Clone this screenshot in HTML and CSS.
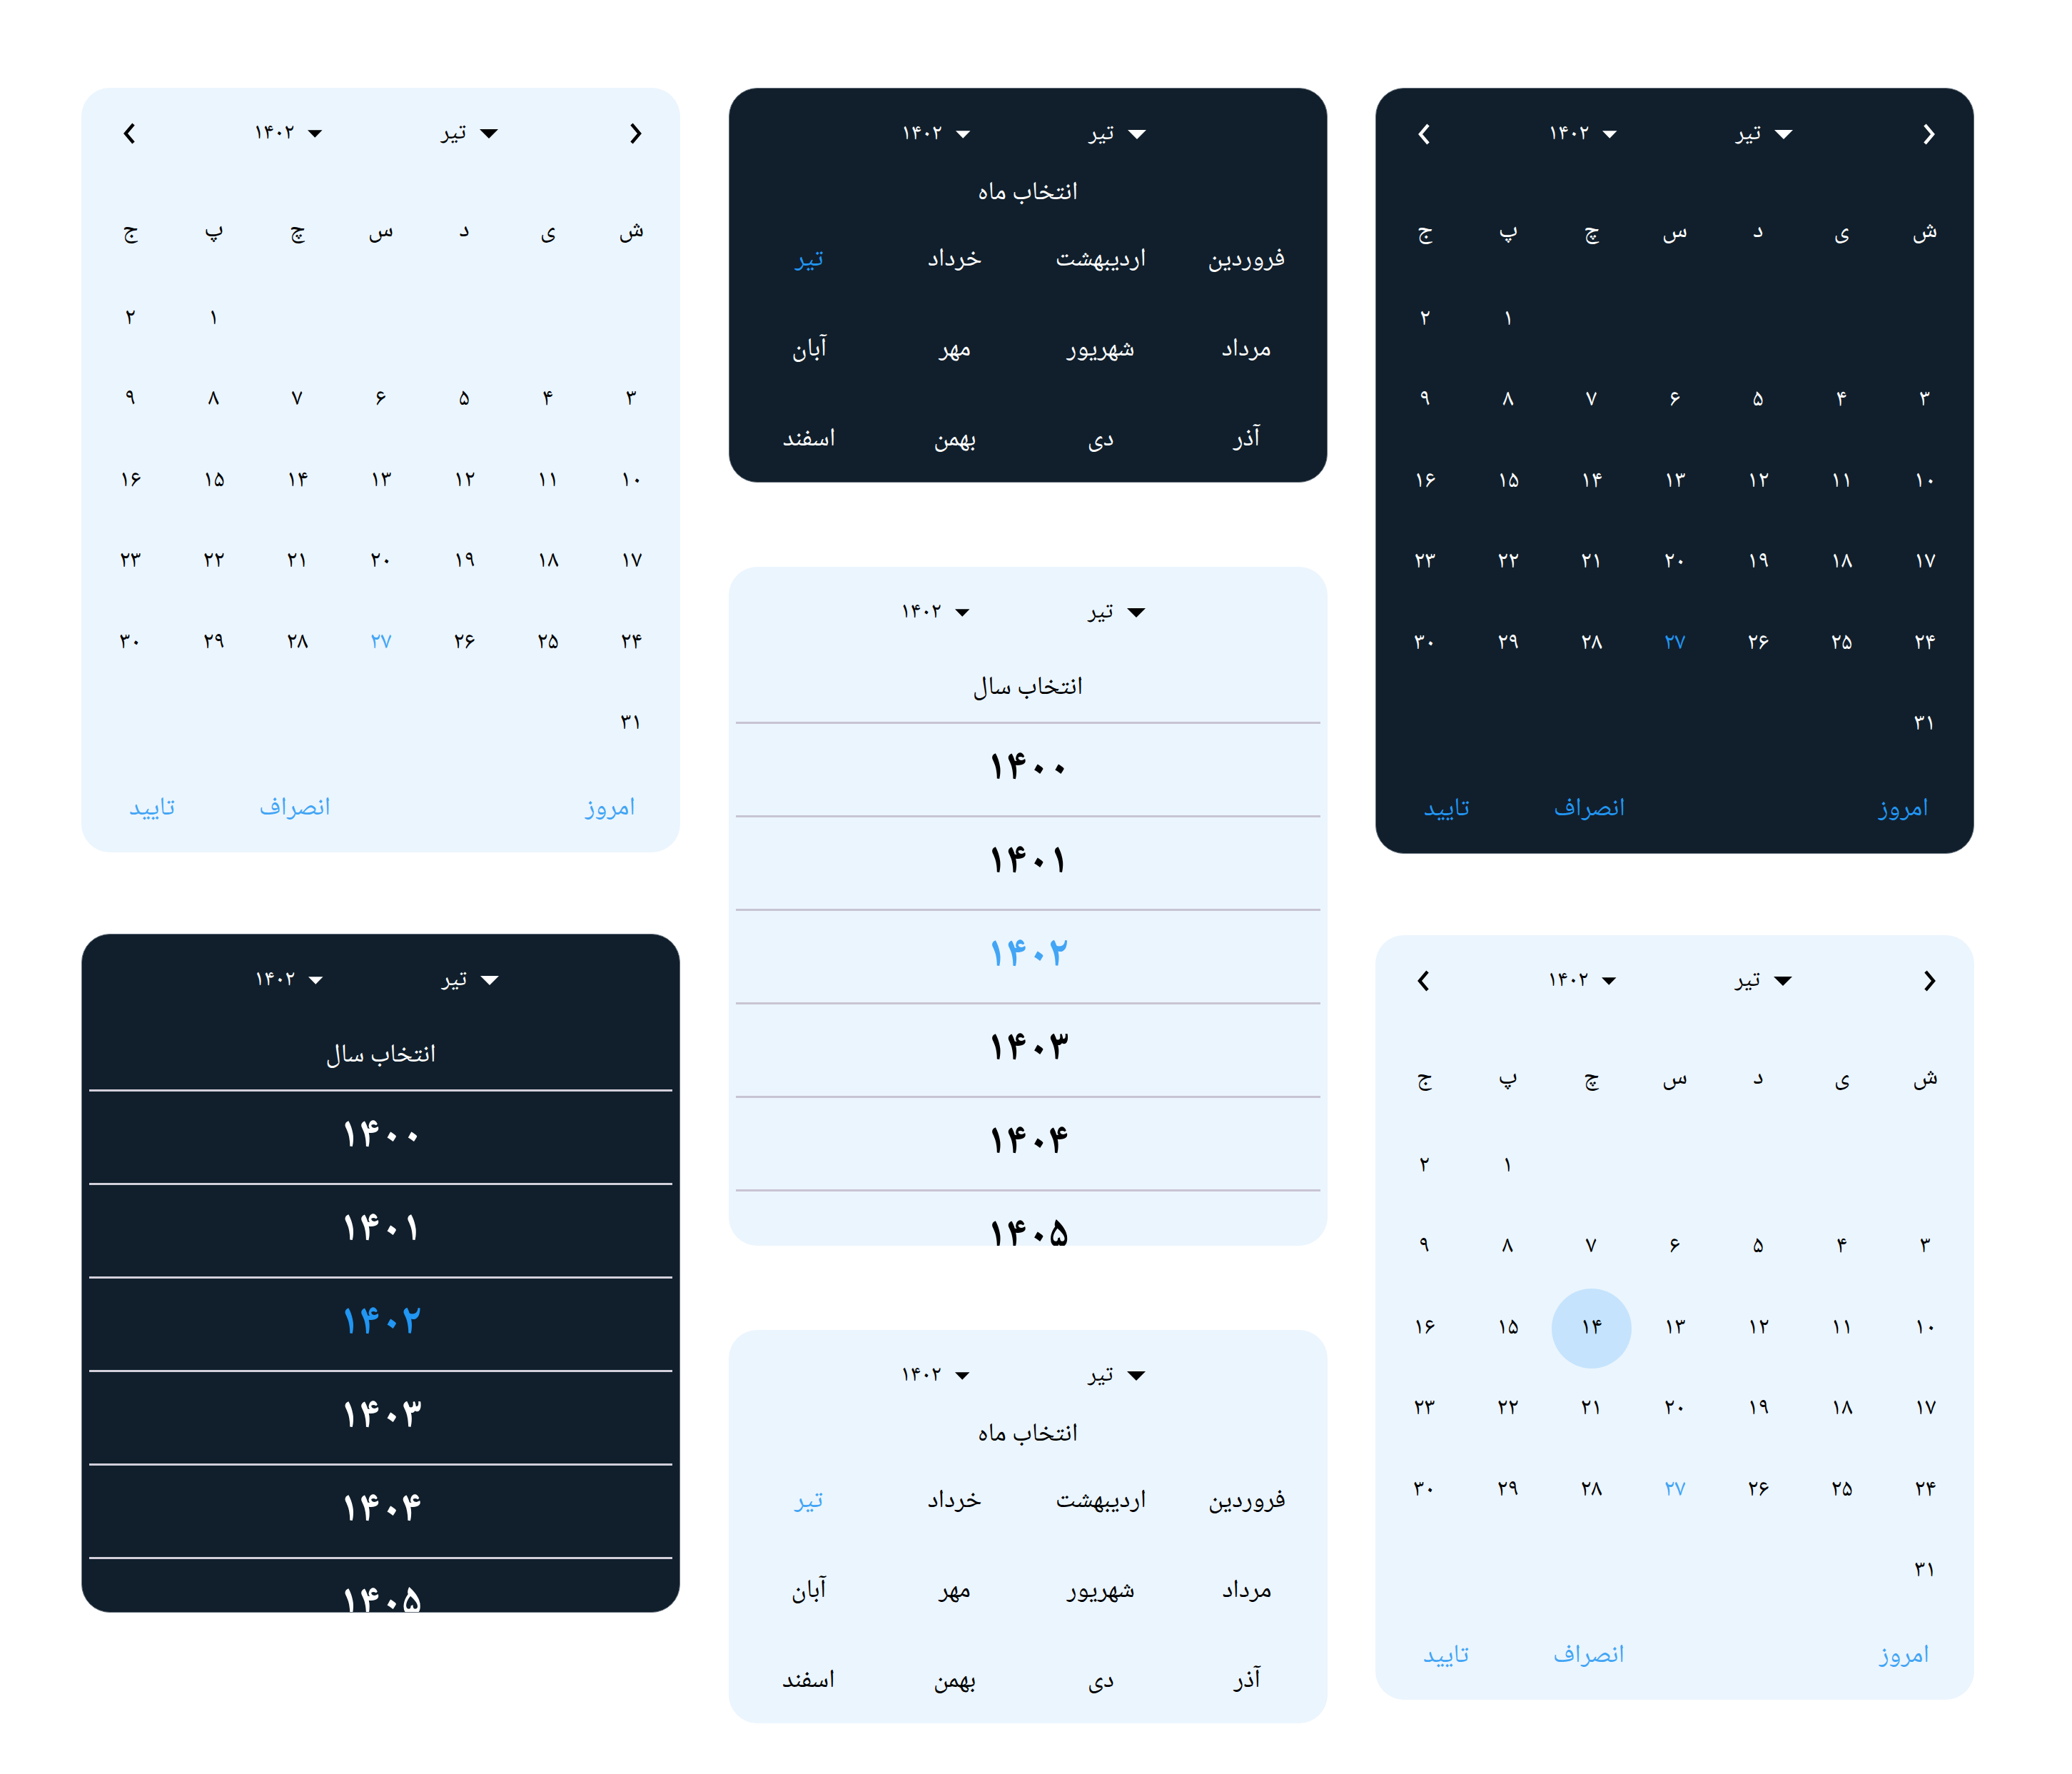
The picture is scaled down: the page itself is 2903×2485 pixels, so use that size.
FILE: index.html
```html
<!DOCTYPE html>
<html lang="fa">
<head>
<meta charset="utf-8">
<title>Persian date pickers</title>
<link rel="stylesheet" href="styles.css">
</head>
<body>
<div class="page">

  <!-- Column 1 -->
  <div class="col col-narrow">
    <section class="card light cal">
      <div class="hdr">
        <span class="chev"><svg viewBox="0 0 20 32" width="20" height="32"><polyline points="16,3 5,16 16,29"/></svg></span>
        <div class="dds">
          <div class="dd dd-year"><span>۱۴۰۲</span><svg class="tri" viewBox="0 0 26 13" width="26" height="13"><polygon points="0,0 26,0 13,13"/></svg></div>
          <div class="dd dd-month"><span>تیر</span><svg class="tri" viewBox="0 0 26 13" width="26" height="13"><polygon points="0,0 26,0 13,13"/></svg></div>
        </div>
        <span class="chev"><svg viewBox="0 0 20 32" width="20" height="32"><polyline points="4,3 15,16 4,29"/></svg></span>
      </div>
      <div class="week"><span>ش</span><span>ی</span><span>د</span><span>س</span><span>چ</span><span>پ</span><span>ج</span></div>
      <div class="days">
        <span class="first">۱</span><span>۲</span>
        <span>۳</span><span>۴</span><span>۵</span><span>۶</span><span>۷</span><span>۸</span><span>۹</span>
        <span>۱۰</span><span>۱۱</span><span>۱۲</span><span>۱۳</span><span>۱۴</span><span>۱۵</span><span>۱۶</span>
        <span>۱۷</span><span>۱۸</span><span>۱۹</span><span>۲۰</span><span>۲۱</span><span>۲۲</span><span>۲۳</span>
        <span>۲۴</span><span>۲۵</span><span>۲۶</span><span class="today">۲۷</span><span>۲۸</span><span>۲۹</span><span>۳۰</span>
        <span>۳۱</span>
      </div>
      <div class="foot">
        <span class="btn">امروز</span>
        <div class="foot-group"><span class="btn">انصراف</span><span class="btn">تایید</span></div>
      </div>
    </section>

    <section class="card dark years">
      <div class="hdr">
        <span class="chev hidden"><svg viewBox="0 0 20 32" width="20" height="32"><polyline points="16,3 5,16 16,29"/></svg></span>
        <div class="dds">
          <div class="dd dd-year"><span>۱۴۰۲</span><svg class="tri" viewBox="0 0 26 13" width="26" height="13"><polygon points="0,0 26,0 13,13"/></svg></div>
          <div class="dd dd-month"><span>تیر</span><svg class="tri" viewBox="0 0 26 13" width="26" height="13"><polygon points="0,0 26,0 13,13"/></svg></div>
        </div>
        <span class="chev hidden"><svg viewBox="0 0 20 32" width="20" height="32"><polyline points="4,3 15,16 4,29"/></svg></span>
      </div>
      <div class="ytitle">انتخاب سال</div>
      <div class="ylist">
        <div class="yitem">۱۴۰۰</div>
        <div class="yitem">۱۴۰۱</div>
        <div class="yitem sel">۱۴۰۲</div>
        <div class="yitem">۱۴۰۳</div>
        <div class="yitem">۱۴۰۴</div>
        <div class="yitem">۱۴۰۵</div>
        <div class="yitem">۱۴۰۶</div>
      </div>
    </section>
  </div>

  <!-- Column 2 -->
  <div class="col col-wide">
    <section class="card dark months">
      <div class="hdr">
        <span class="chev hidden"><svg viewBox="0 0 20 32" width="20" height="32"><polyline points="16,3 5,16 16,29"/></svg></span>
        <div class="dds">
          <div class="dd dd-year"><span>۱۴۰۲</span><svg class="tri" viewBox="0 0 26 13" width="26" height="13"><polygon points="0,0 26,0 13,13"/></svg></div>
          <div class="dd dd-month"><span>تیر</span><svg class="tri" viewBox="0 0 26 13" width="26" height="13"><polygon points="0,0 26,0 13,13"/></svg></div>
        </div>
        <span class="chev hidden"><svg viewBox="0 0 20 32" width="20" height="32"><polyline points="4,3 15,16 4,29"/></svg></span>
      </div>
      <div class="mtitle">انتخاب ماه</div>
      <div class="mgrid">
        <span>فروردین</span><span>اردیبهشت</span><span>خرداد</span><span class="sel">تیر</span>
        <span>مرداد</span><span>شهریور</span><span>مهر</span><span>آبان</span>
        <span>آذر</span><span>دی</span><span>بهمن</span><span>اسفند</span>
      </div>
    </section>

    <section class="card light years">
      <div class="hdr">
        <span class="chev hidden"><svg viewBox="0 0 20 32" width="20" height="32"><polyline points="16,3 5,16 16,29"/></svg></span>
        <div class="dds">
          <div class="dd dd-year"><span>۱۴۰۲</span><svg class="tri" viewBox="0 0 26 13" width="26" height="13"><polygon points="0,0 26,0 13,13"/></svg></div>
          <div class="dd dd-month"><span>تیر</span><svg class="tri" viewBox="0 0 26 13" width="26" height="13"><polygon points="0,0 26,0 13,13"/></svg></div>
        </div>
        <span class="chev hidden"><svg viewBox="0 0 20 32" width="20" height="32"><polyline points="4,3 15,16 4,29"/></svg></span>
      </div>
      <div class="ytitle">انتخاب سال</div>
      <div class="ylist">
        <div class="yitem">۱۴۰۰</div>
        <div class="yitem">۱۴۰۱</div>
        <div class="yitem sel">۱۴۰۲</div>
        <div class="yitem">۱۴۰۳</div>
        <div class="yitem">۱۴۰۴</div>
        <div class="yitem">۱۴۰۵</div>
        <div class="yitem">۱۴۰۶</div>
      </div>
    </section>

    <section class="card light months">
      <div class="hdr">
        <span class="chev hidden"><svg viewBox="0 0 20 32" width="20" height="32"><polyline points="16,3 5,16 16,29"/></svg></span>
        <div class="dds">
          <div class="dd dd-year"><span>۱۴۰۲</span><svg class="tri" viewBox="0 0 26 13" width="26" height="13"><polygon points="0,0 26,0 13,13"/></svg></div>
          <div class="dd dd-month"><span>تیر</span><svg class="tri" viewBox="0 0 26 13" width="26" height="13"><polygon points="0,0 26,0 13,13"/></svg></div>
        </div>
        <span class="chev hidden"><svg viewBox="0 0 20 32" width="20" height="32"><polyline points="4,3 15,16 4,29"/></svg></span>
      </div>
      <div class="mtitle">انتخاب ماه</div>
      <div class="mgrid">
        <span>فروردین</span><span>اردیبهشت</span><span>خرداد</span><span class="sel">تیر</span>
        <span>مرداد</span><span>شهریور</span><span>مهر</span><span>آبان</span>
        <span>آذر</span><span>دی</span><span>بهمن</span><span>اسفند</span>
      </div>
    </section>
  </div>

  <!-- Column 3 -->
  <div class="col col-narrow">
    <section class="card dark cal">
      <div class="hdr">
        <span class="chev"><svg viewBox="0 0 20 32" width="20" height="32"><polyline points="16,3 5,16 16,29"/></svg></span>
        <div class="dds">
          <div class="dd dd-year"><span>۱۴۰۲</span><svg class="tri" viewBox="0 0 26 13" width="26" height="13"><polygon points="0,0 26,0 13,13"/></svg></div>
          <div class="dd dd-month"><span>تیر</span><svg class="tri" viewBox="0 0 26 13" width="26" height="13"><polygon points="0,0 26,0 13,13"/></svg></div>
        </div>
        <span class="chev"><svg viewBox="0 0 20 32" width="20" height="32"><polyline points="4,3 15,16 4,29"/></svg></span>
      </div>
      <div class="week"><span>ش</span><span>ی</span><span>د</span><span>س</span><span>چ</span><span>پ</span><span>ج</span></div>
      <div class="days">
        <span class="first">۱</span><span>۲</span>
        <span>۳</span><span>۴</span><span>۵</span><span>۶</span><span>۷</span><span>۸</span><span>۹</span>
        <span>۱۰</span><span>۱۱</span><span>۱۲</span><span>۱۳</span><span>۱۴</span><span>۱۵</span><span>۱۶</span>
        <span>۱۷</span><span>۱۸</span><span>۱۹</span><span>۲۰</span><span>۲۱</span><span>۲۲</span><span>۲۳</span>
        <span>۲۴</span><span>۲۵</span><span>۲۶</span><span class="today">۲۷</span><span>۲۸</span><span>۲۹</span><span>۳۰</span>
        <span>۳۱</span>
      </div>
      <div class="foot">
        <span class="btn">امروز</span>
        <div class="foot-group"><span class="btn">انصراف</span><span class="btn">تایید</span></div>
      </div>
    </section>

    <section class="card light cal">
      <div class="hdr">
        <span class="chev"><svg viewBox="0 0 20 32" width="20" height="32"><polyline points="16,3 5,16 16,29"/></svg></span>
        <div class="dds">
          <div class="dd dd-year"><span>۱۴۰۲</span><svg class="tri" viewBox="0 0 26 13" width="26" height="13"><polygon points="0,0 26,0 13,13"/></svg></div>
          <div class="dd dd-month"><span>تیر</span><svg class="tri" viewBox="0 0 26 13" width="26" height="13"><polygon points="0,0 26,0 13,13"/></svg></div>
        </div>
        <span class="chev"><svg viewBox="0 0 20 32" width="20" height="32"><polyline points="4,3 15,16 4,29"/></svg></span>
      </div>
      <div class="week"><span>ش</span><span>ی</span><span>د</span><span>س</span><span>چ</span><span>پ</span><span>ج</span></div>
      <div class="days">
        <span class="first">۱</span><span>۲</span>
        <span>۳</span><span>۴</span><span>۵</span><span>۶</span><span>۷</span><span>۸</span><span>۹</span>
        <span>۱۰</span><span>۱۱</span><span>۱۲</span><span>۱۳</span><span class="picked">۱۴</span><span>۱۵</span><span>۱۶</span>
        <span>۱۷</span><span>۱۸</span><span>۱۹</span><span>۲۰</span><span>۲۱</span><span>۲۲</span><span>۲۳</span>
        <span>۲۴</span><span>۲۵</span><span>۲۶</span><span class="today">۲۷</span><span>۲۸</span><span>۲۹</span><span>۳۰</span>
        <span>۳۱</span>
      </div>
      <div class="foot">
        <span class="btn">امروز</span>
        <div class="foot-group"><span class="btn">انصراف</span><span class="btn">تایید</span></div>
      </div>
    </section>
  </div>
</div>
</body>
</html>
```

FILE: styles.css
```css
* { box-sizing: border-box; }

html, body {
  margin: 0;
  padding: 0;
  background: #ffffff;
}

body {
  font-family: "Noto Naskh Arabic", "DejaVu Sans", sans-serif;
  color: #000;
}

.page {
  display: flex;
  align-items: flex-start;
  gap: 67.5px;
  padding: 123px 0 0 114px;
}

.col {
  display: flex;
  flex-direction: column;
  width: 839px;
  gap: 114px;
}

.col-wide { gap: 118px; }

.card {
  border-radius: 40px;
  padding-top: 24px;
  overflow: hidden;
}

.light { background: #ebf5fe; color: #000; }
.dark  { background: #111f2c; color: #fff; border: 1px solid #66717c; }

/* ---------- header ---------- */
.hdr {
  direction: ltr;
  display: flex;
  align-items: center;
  height: 80px;
  padding: 0 32px 0 37px;
}

.chev {
  width: 60px;
  height: 80px;
  display: flex;
  align-items: center;
  justify-content: center;
}

.chev svg polyline {
  fill: none;
  stroke: currentColor;
  stroke-width: 4.5;
  stroke-linejoin: miter;
}

.hidden { visibility: hidden; }

.dds {
  flex: 1;
  display: flex;
  align-items: center;
  padding-left: 144px;
  gap: 162px;
}

.dd {
  display: flex;
  align-items: center;
  justify-content: flex-end;
  gap: 19px;
  font-size: 32px;
}

.dd-year { width: 97px; }
.dd-month { width: 84px; }

.tri polygon { fill: currentColor; }

/* ---------- calendar ---------- */
.cal { padding-bottom: 21px; }

.week, .days {
  display: grid;
  grid-template-columns: repeat(7, 1fr);
  direction: rtl;
  padding: 0 10px;
}

.week {
  height: 80px;
  margin: 56px 0 27px;
  font-size: 35px;
}

.week span, .days span {
  display: flex;
  align-items: center;
  justify-content: center;
}

.days {
  grid-auto-rows: 113.5px;
  font-size: 34px;
}

.days .first { grid-column-start: 6; }

.light .today { color: #42a5f5; }
.dark .today { color: #2196f3; }

.days .picked {
  position: relative;
  z-index: 0;
}

.days .picked::before {
  content: "";
  position: absolute;
  z-index: -1;
  width: 112px;
  height: 112px;
  border-radius: 50%;
  background: #c5e3fc;
  left: 50%;
  top: 50%;
  transform: translate(-50%, -50%);
}

.foot {
  direction: rtl;
  display: flex;
  align-items: center;
  justify-content: space-between;
  height: 80px;
  margin-top: 22px;
  padding: 0 63px 0 67px;
  font-size: 36px;
}

.foot-group {
  display: flex;
  gap: 118px;
}

.light .btn { color: #42a5f5; }
.dark .btn { color: #2196f3; }

/* ---------- years ---------- */
.years { height: 951px; }

.ytitle {
  height: 113px;
  padding-top: 20px;
  display: flex;
  align-items: center;
  justify-content: center;
  font-size: 36px;
}

.ylist { padding: 0 10px; }

.yitem {
  height: 131px;
  border-top: 3px solid #c8c4d3;
  display: flex;
  align-items: center;
  justify-content: center;
  font-size: 60px;
  font-weight: 700;
}

.dark .yitem { border-top-color: #d3cfdb; }
.light .yitem.sel { color: #42a5f5; }
.dark .yitem.sel { color: #2196f3; }

/* ---------- months ---------- */
.mtitle {
  height: 86px;
  display: flex;
  align-items: center;
  justify-content: center;
  font-size: 36px;
}

.mgrid {
  direction: rtl;
  display: grid;
  grid-template-columns: repeat(4, 1fr);
  grid-auto-rows: 100px;
  row-gap: 26px;
  padding: 0 10px 9px;
  font-size: 36px;
}

.mgrid span {
  display: flex;
  align-items: center;
  justify-content: center;
}

.light .mgrid .sel { color: #42a5f5; }
.dark .mgrid .sel { color: #2196f3; }
```
